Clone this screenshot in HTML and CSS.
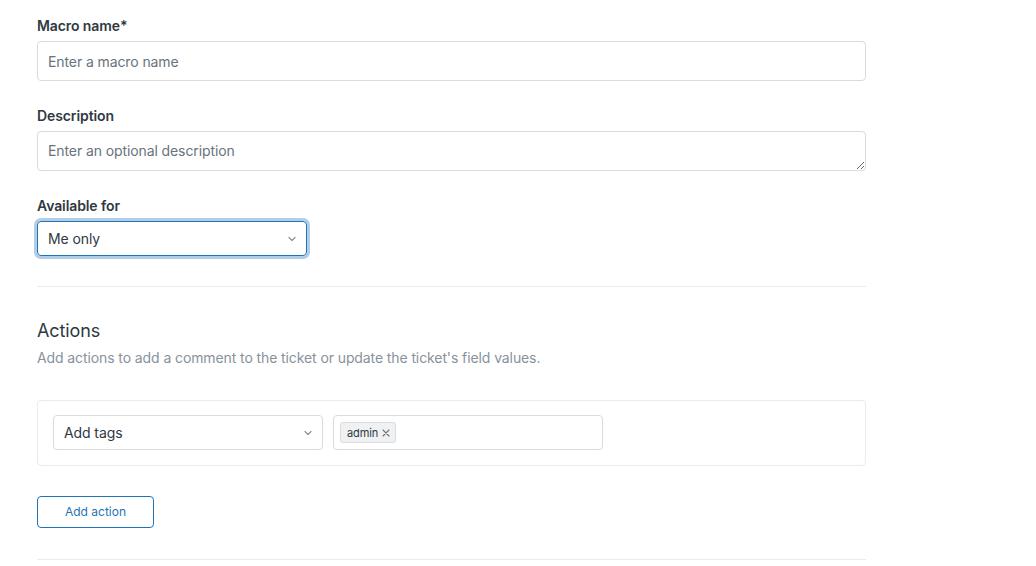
FILE: index.html
```html
<!DOCTYPE html>
<html lang="en">
<head>
    <meta charset="UTF-8">
    <meta name="viewport" content="width=device-width, initial-scale=1.0">
    <title>New macro</title>
    <link rel="stylesheet" href="styles.css">
</head>
<body>
    <div class="macro-form">
        <div class="form-group">
            <label for="name">Macro name*</label>
            <input type="text" id="name" class="text-input" placeholder="Enter a macro name">
        </div>
        <div class="form-group">
            <label for="desc">Description</label>
            <textarea id="desc" class="text-input text-area" rows="1" placeholder="Enter an optional description"></textarea>
        </div>
        <div class="form-group">
            <label for="avail">Available for</label>
            <div class="select select-focused">
                <span>Me only</span>
                <svg class="chevron" width="12" height="12" viewBox="0 0 12 12"><path d="M3 4.5l3 3 3-3" fill="none" stroke="currentColor" stroke-width="1.2" stroke-linecap="round" stroke-linejoin="round"/></svg>
            </div>
        </div>

        <hr class="divider">

        <h2 class="section-title">Actions</h2>
        <p class="section-hint">Add actions to add a comment to the ticket or update the ticket's field values.</p>

        <div class="action-card">
            <div class="select">
                <span>Add tags</span>
                <svg class="chevron" width="12" height="12" viewBox="0 0 12 12"><path d="M3 4.5l3 3 3-3" fill="none" stroke="currentColor" stroke-width="1.2" stroke-linecap="round" stroke-linejoin="round"/></svg>
            </div>
            <div class="tag-input">
                <span class="tag">admin
                    <svg class="tag-close" width="8" height="8" viewBox="0 0 8 8"><path d="M1 1l6 6M7 1L1 7" stroke="currentColor" stroke-width="1.1" stroke-linecap="round"/></svg>
                </span>
            </div>
        </div>

        <button type="button" class="add-button">Add action</button>

        <hr class="divider divider-bottom">
    </div>
</body>
</html>
```

FILE: styles.css
```css
body {
    margin: 0;
    font-family: Inter, "Noto Sans", "Liberation Sans", sans-serif;
    color: #2f3941;
    background: #fff;
    letter-spacing: -0.1px;
}

.macro-form {
    width: 829px;
    padding: 16px 0 0 37px;
}

.form-group {
    margin-bottom: 25px;
}

.form-group label {
    display: block;
    font-size: 14px;
    font-weight: 600;
    line-height: 20px;
    margin-bottom: 5px;
}

.text-input {
    display: block;
    box-sizing: border-box;
    width: 100%;
    height: 40px;
    padding: 9px 10px;
    border: 1px solid #d8dcde;
    border-radius: 4px;
    font-family: inherit;
    font-size: 14px;
    line-height: 20px;
    letter-spacing: -0.1px;
    color: #2f3941;
}

.text-input::placeholder {
    color: #68737d;
}

.text-area {
    resize: vertical;
    min-height: 40px;
}

.select {
    box-sizing: border-box;
    display: flex;
    align-items: center;
    justify-content: space-between;
    width: 270px;
    height: 35px;
    padding: 0 8px 0 10px;
    border: 1px solid #d8dcde;
    border-radius: 4px;
    font-size: 14px;
    color: #2f3941;
}

.select-focused {
    border-color: #1f73b7;
    box-shadow: 0 0 0 3px rgba(31, 115, 183, 0.35);
}

.chevron {
    color: #87929d;
}

.divider {
    border: none;
    border-top: 1px solid #e9ebed;
    margin: 30px 0 32px;
}

.section-title {
    margin: 0;
    font-size: 18px;
    font-weight: 400;
    line-height: 24px;
}

.section-hint {
    margin: 5px 0 32px;
    font-size: 14px;
    line-height: 20px;
    color: #87929d;
}

.action-card {
    display: flex;
    gap: 10px;
    padding: 14px 15px 15px;
    border: 1px solid #e9ebed;
    border-radius: 4px;
}

.tag-input {
    box-sizing: border-box;
    display: flex;
    align-items: center;
    width: 270px;
    height: 35px;
    padding: 0 6px;
    border: 1px solid #d8dcde;
    border-radius: 4px;
}

.tag {
    display: inline-flex;
    align-items: center;
    gap: 4px;
    height: 21px;
    padding: 0 5px 0 6px;
    box-sizing: border-box;
    border: 1px solid #d8dcde;
    border-radius: 3px;
    background: #f0f1f2;
    font-size: 11px;
    color: #2f3941;
}

.tag-close {
    color: #68737d;
}

.add-button {
    display: block;
    width: 117px;
    height: 32px;
    margin-top: 30px;
    border: 1px solid #1f73b7;
    border-radius: 4px;
    background: #fff;
    font-family: inherit;
    font-size: 12px;
    line-height: 28px;
    color: #1f73b7;
}

.divider-bottom {
    margin: 31px 0 0;
}
```
